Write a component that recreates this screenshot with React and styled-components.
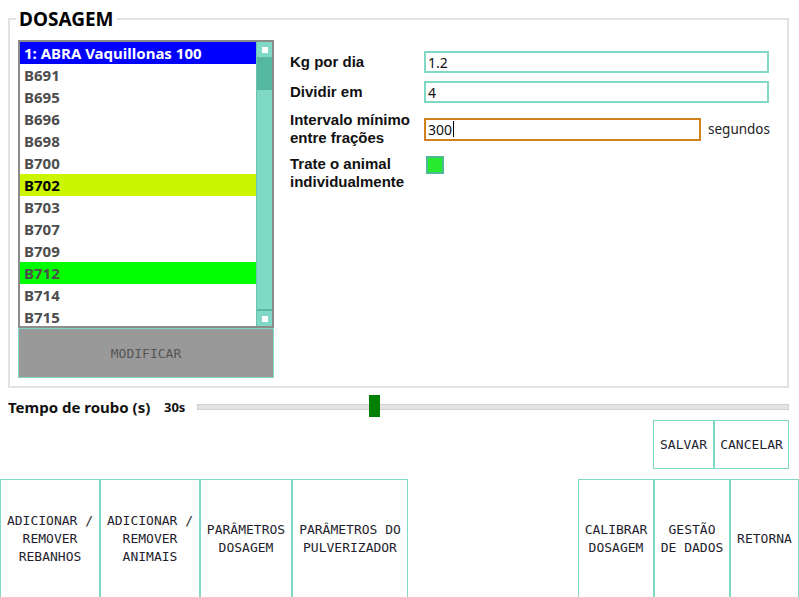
import React from "react";
import styled, { createGlobalStyle } from "styled-components";

const GlobalStyle = createGlobalStyle`
  html, body {
    margin: 0;
    padding: 0;
    background: #ffffff;
  }
  body {
    font-family: "Noto Sans", "DejaVu Sans", sans-serif;
    color: #111;
  }
`;

const Screen = styled.div`
  width: 799px;
  height: 597px;
  overflow: hidden;
  display: flex;
  flex-direction: column;
  & > * {
    flex-shrink: 0;
  }
`;

const Panel = styled.fieldset`
  margin: 8px 10px 0 8px;
  padding: 10px 8px 6px 8px;
  border: 2px solid #e2e2e2;
  height: 380px;
  box-sizing: border-box;
  display: flex;
  gap: 16px;
  align-items: flex-start;
`;

const Title = styled.legend`
  font-weight: bold;
  font-size: 19px;
  line-height: 22px;
  padding: 0 3px;
  margin-left: -2px;
  color: #000;
`;

const LeftColumn = styled.div`
  display: flex;
  flex-direction: column;
  width: 256px;
`;

const ListBox = styled.div`
  border: 2px solid #8c8c8c;
  height: 284px;
  display: flex;
  background: #fff;
  overflow: hidden;
`;

const Rows = styled.div`
  flex: 1;
  display: flex;
  flex-direction: column;
`;

const Row = styled.div`
  flex: none;
  height: 22px;
  line-height: 22px;
  padding-left: 4px;
  font-weight: bold;
  font-size: 15px;
  white-space: nowrap;
  background: ${(p) => p.$bg || "#fff"};
  color: ${(p) => p.$fg || "#4d4d4d"};
`;

const ScrollTrack = styled.div`
  width: 15px;
  background: #80d8c6;
  display: flex;
  flex-direction: column;
  border-left: 1px solid #6cc4b0;
`;

const ScrollButton = styled.div`
  height: 15px;
  display: flex;
  align-items: center;
  justify-content: center;
  border-bottom: ${(p) => (p.$top ? "1px solid #5cb8a2" : "none")};
  border-top: ${(p) => (p.$top ? "none" : "2px solid #5cb8a2")};
  &::after {
    content: "";
    width: 6px;
    height: 6px;
    background: #fff;
  }
`;

const ScrollThumb = styled.div`
  height: 32px;
  background: #55b8a0;
`;

const ScrollRest = styled.div`
  flex: 1;
`;

const ModifyButton = styled.div`
  height: 48px;
  background: #999999;
  border: 1px solid #80d8c6;
  display: flex;
  align-items: center;
  justify-content: center;
  font-family: "DejaVu Sans Mono", "Liberation Mono", monospace;
  font-size: 13px;
  color: #555;
`;

const Form = styled.div`
  flex: 1;
  display: grid;
  grid-template-columns: 134px 1fr;
  row-gap: 8px;
  margin-top: 11px;
  margin-right: 10px;
  align-items: center;
`;

const Label = styled.div`
  font-family: "Liberation Sans", Arial, sans-serif;
  font-weight: bold;
  font-size: 15px;
  line-height: 18px;
  color: #111;
`;

const FieldLine = styled.div`
  display: flex;
  align-items: center;
  gap: 7px;
  align-self: ${(p) => (p.$top ? "start" : "center")};
`;

const TextBox = styled.div`
  flex: 1;
  height: ${(p) => (p.$active ? 23 : 22)}px;
  box-sizing: border-box;
  border: 2px solid ${(p) => (p.$active ? "#d2801e" : "#80d8c6")};
  padding-left: 2px;
  font-size: 14px;
  color: #111;
  display: flex;
  align-items: center;
`;

const Caret = styled.span`
  display: inline-block;
  width: 1px;
  height: 16px;
  background: #000;
  margin-left: 1px;
`;

const Suffix = styled.span`
  font-size: 13.5px;
  color: #222;
  width: 61px;
  white-space: nowrap;
`;

const Check = styled.div`
  width: 18px;
  height: 18px;
  box-sizing: border-box;
  margin-left: 2px;
  margin-top: 1px;
  border: 2px solid #4cb896;
  background: #26ea2e;
`;

const SliderRow = styled.div`
  display: flex;
  align-items: center;
  height: 24px;
  margin: 7px 10px 0 8px;
`;

const SliderLabel = styled.span`
  font-weight: bold;
  font-size: 15px;
  width: 156px;
  color: #111;
`;

const SliderValue = styled.span`
  font-weight: bold;
  font-size: 13px;
  width: 33px;
  color: #111;
`;

const Track = styled.div`
  flex: 1;
  height: 4px;
  background: #e4e4e4;
  border: 1px solid #d0d0d0;
  position: relative;
`;

const Thumb = styled.div`
  position: absolute;
  top: -10px;
  width: 11px;
  height: 22px;
  background: #008000;
`;

const ActionRow = styled.div`
  display: flex;
  justify-content: flex-end;
  margin: 1px 10px 0 0;
`;

const Button = styled.div`
  box-sizing: border-box;
  width: ${(p) => p.$w}px;
  height: ${(p) => p.$h || 120}px;
  border: 1px solid #80d8c6;
  display: flex;
  align-items: center;
  justify-content: center;
  text-align: center;
  font-family: "DejaVu Sans Mono", "Liberation Mono", monospace;
  font-size: 13px;
  line-height: 18px;
  color: #1e1e2e;
  background: #fff;
  white-space: pre-line;
`;

const NavRow = styled.div`
  display: flex;
  justify-content: space-between;
  margin-top: 10px;
`;

const NavGroup = styled.div`
  display: flex;
`;

const items = [
  { name: "1: ABRA Vaquillonas 100", bg: "#0000ff", fg: "#fff" },
  { name: "B691" },
  { name: "B695" },
  { name: "B696" },
  { name: "B698" },
  { name: "B700" },
  { name: "B702", bg: "#ccf500", fg: "#000" },
  { name: "B703" },
  { name: "B707" },
  { name: "B709" },
  { name: "B712", bg: "#00ff00" },
  { name: "B714" },
  { name: "B715" },
];

const leftButtons = [
  { w: 100, text: "ADICIONAR /\nREMOVER\nREBANHOS" },
  { w: 100, text: "ADICIONAR /\nREMOVER\nANIMAIS" },
  { w: 92, text: "PARÂMETROS\nDOSAGEM" },
  { w: 116, text: "PARÂMETROS DO\nPULVERIZADOR" },
];

const rightButtons = [
  { w: 76, text: "CALIBRAR\nDOSAGEM" },
  { w: 76, text: "GESTÃO\nDE DADOS" },
  { w: 69, text: "RETORNA" },
];

export default function App() {
  const sliderPos = 171; // px from track start

  return (
    <Screen>
      <GlobalStyle />
      <Panel>
        <Title>DOSAGEM</Title>
        <LeftColumn>
          <ListBox>
            <Rows>
              {items.map((it) => (
                <Row key={it.name} $bg={it.bg} $fg={it.fg}>
                  {it.name}
                </Row>
              ))}
            </Rows>
            <ScrollTrack>
              <ScrollButton $top />
              <ScrollThumb />
              <ScrollRest />
              <ScrollButton />
            </ScrollTrack>
          </ListBox>
          <ModifyButton>MODIFICAR</ModifyButton>
        </LeftColumn>

        <Form>
          <Label>Kg por dia</Label>
          <FieldLine>
            <TextBox>1.2</TextBox>
          </FieldLine>

          <Label>Dividir em</Label>
          <FieldLine>
            <TextBox>4</TextBox>
          </FieldLine>

          <Label>
            Intervalo mínimo
            <br />
            entre frações
          </Label>
          <FieldLine>
            <TextBox $active>
              300
              <Caret />
            </TextBox>
            <Suffix>segundos</Suffix>
          </FieldLine>

          <Label>
            Trate o animal
            <br />
            individualmente
          </Label>
          <FieldLine $top>
            <Check />
          </FieldLine>
        </Form>
      </Panel>

      <SliderRow>
        <SliderLabel>Tempo de roubo (s)</SliderLabel>
        <SliderValue>30s</SliderValue>
        <Track>
          <Thumb style={{ left: sliderPos }} />
        </Track>
      </SliderRow>

      <ActionRow>
        <Button $w={61} $h={49}>SALVAR</Button>
        <Button $w={75} $h={49}>CANCELAR</Button>
      </ActionRow>

      <NavRow>
        <NavGroup>
          {leftButtons.map((b) => (
            <Button key={b.text} $w={b.w}>
              {b.text}
            </Button>
          ))}
        </NavGroup>
        <NavGroup>
          {rightButtons.map((b) => (
            <Button key={b.text} $w={b.w}>
              {b.text}
            </Button>
          ))}
        </NavGroup>
      </NavRow>
    </Screen>
  );
}
